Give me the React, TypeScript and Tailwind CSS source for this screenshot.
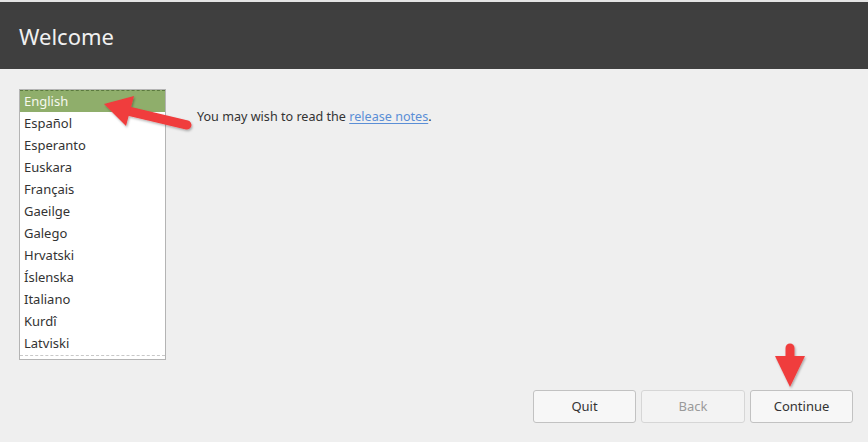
import React from "react";

const LANGUAGES = [
  "English",
  "Español",
  "Esperanto",
  "Euskara",
  "Français",
  "Gaeilge",
  "Galego",
  "Hrvatski",
  "Íslenska",
  "Italiano",
  "Kurdî",
  "Latviski",
];

export default function App() {
  return (
    <div
      className="relative flex h-[442px] w-[868px] flex-col overflow-hidden bg-[#efefef] text-[#3c3c3c]"
      style={{ fontFamily: '"Noto Sans", "Open Sans", sans-serif' }}
    >
      {/* Title bar */}
      <div className="h-[2px] bg-[#e4e4e4]" />
      <div className="flex h-[67px] items-center bg-[#3f3f3f] px-[19px]">
        <h1 className="text-[22px] font-normal leading-none text-[#f0f0f0]">Welcome</h1>
      </div>

      {/* Body */}
      <div className="flex flex-1 flex-col pl-[19px] pr-[15px] pt-[20px] pb-[19px]">
        <div className="flex gap-[31px]">
          <div className="flex h-[271px] w-[147px] flex-col border border-[#b4b4b4] bg-white">
            {LANGUAGES.map((lang, i) => (
              <div
                key={lang}
                className={
                  i === 0
                    ? "flex h-[22px] shrink-0 items-center border-t border-dashed border-[#5b7a3e] bg-[#8fae6b] px-[4px] pt-px text-[13px] text-[#f6f8ee]"
                    : "flex h-[22px] shrink-0 items-center px-[4px] pt-[2px] text-[13px] text-[#333]"
                }
              >
                {lang}
              </div>
            ))}
            <div className="mt-[1px] border-t border-dashed border-[#c8c8c8]" />
          </div>
          <p className="mt-[19px] text-[12.6px] text-[#333]">
            You may wish to read the{" "}
            <span className="text-[#5a8ed6] underline underline-offset-2">release notes</span>.
          </p>
        </div>

        <div className="mt-auto flex justify-end gap-[5px]">
          <button className="h-[33px] w-[103px] rounded-[3px] border border-[#c2c2c2] bg-[#f7f7f7] pt-px text-[13px] text-[#333]">
            Quit
          </button>
          <button className="h-[33px] w-[104px] rounded-[3px] border border-[#d6d6d6] bg-[#f3f3f3] pt-px text-[13px] text-[#9a9a9a]">
            Back
          </button>
          <button className="h-[33px] w-[103px] rounded-[3px] border border-[#c2c2c2] bg-[#f7f7f7] pt-px text-[13px] text-[#333]">
            Continue
          </button>
        </div>
      </div>

      {/* Annotation arrows */}
      <svg className="pointer-events-none absolute left-0 top-0" width="868" height="442">
        <defs>
          <filter id="sh" x="-20%" y="-20%" width="140%" height="140%">
            <feDropShadow dx="1" dy="1.5" stdDeviation="1.2" floodColor="#000" floodOpacity="0.3" />
          </filter>
        </defs>
        <g filter="url(#sh)" fill="#f03c3c">
          <line x1="187" y1="125" x2="128" y2="111" stroke="#f03c3c" strokeWidth="9" strokeLinecap="round" />
          <polygon points="104,104 134,96 126,126" />
          <line x1="790" y1="348" x2="790" y2="366" stroke="#f03c3c" strokeWidth="9" strokeLinecap="round" />
          <polygon points="775,356 805,356 790,387" />
        </g>
      </svg>
    </div>
  );
}
